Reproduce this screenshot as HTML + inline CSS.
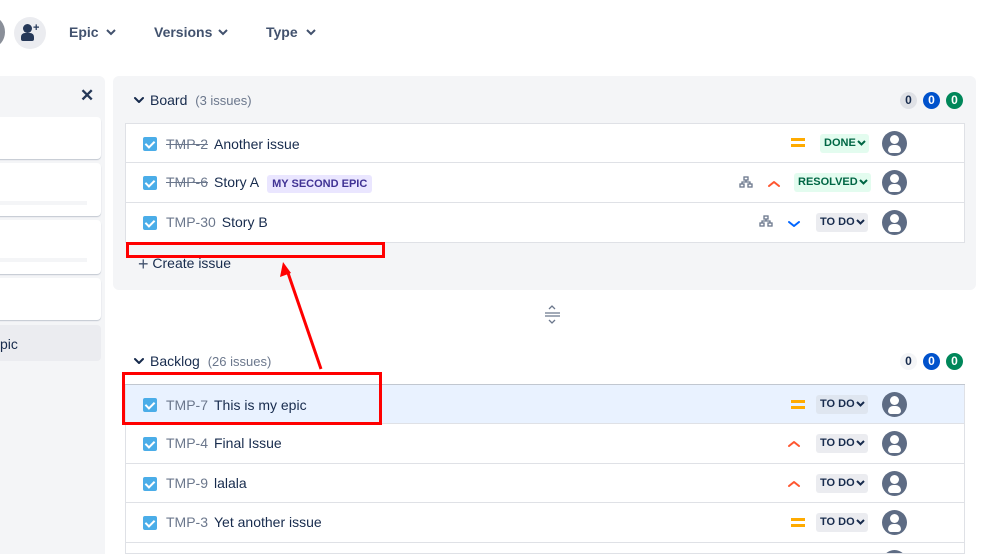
<!DOCTYPE html>
<html><head><style>
*{box-sizing:border-box;margin:0;padding:0}
html,body{width:998px;height:554px;overflow:hidden}
body{background:#fff;font-family:"Liberation Sans",Arial,sans-serif;color:#172b4d;position:relative;font-size:14px}
.a{position:absolute}
.row{position:absolute;left:125px;width:840px;height:40px;background:#fff;border:1px solid #dfe1e6;border-top:none}
.row .cb{position:absolute;left:17px;top:13px;width:14px;height:14px;background:#4bade8;border-radius:2px}
.row .cb:after{content:"";position:absolute;left:4px;top:2px;width:4px;height:7px;border:solid #fff;border-width:0 2px 2px 0;transform:rotate(45deg)}
.row .k{position:absolute;left:40px;top:11px;color:#6b778c;font-size:14px}
.row .s{color:#172b4d;margin-left:6px}
.lz{position:absolute;top:10px;height:19px;border-radius:3px;font-size:11px;font-weight:bold;line-height:19px;padding:0 3px 0 4px;background:#ebecf0;color:#172b4d}
.lz.g{background:#e3fcef;color:#006644}
.lz svg{vertical-align:0px;margin-left:1px}
.av{position:absolute;left:756px;top:7px;width:25px;height:25px;border-radius:50%;background:#5e6c84;overflow:hidden}
.av:before{content:"";position:absolute;left:8px;top:4px;width:9px;height:9px;border-radius:50%;background:#fff}
.av:after{content:"";position:absolute;left:6px;top:14px;width:13px;height:8px;border-radius:5px 5px 3px 3px;background:#fff}
.pe{position:absolute;left:665px;width:14px;height:3px;background:#ffab00}
.cnt{position:absolute;height:17px;min-width:17px;border-radius:9px;font-size:12px;font-weight:bold;text-align:center;line-height:17px}
</style></head><body>
<div class="a" style="left:-20px;top:17px;width:25px;height:30px;border-radius:50%;background:#8a8f99"></div>
<div class="a" style="left:14px;top:17px;width:32px;height:32px;border-radius:50%;background:#ebecf0"></div>
<div class="a" style="left:23px;top:24px;width:9px;height:9px;border-radius:50%;background:#253858"></div>
<div class="a" style="left:21px;top:33px;width:13px;height:8px;border-radius:4px 4px 2px 2px;background:#253858"></div>
<div class="a" style="left:33px;top:22px;font-size:11px;font-weight:bold;color:#253858">+</div>
<div class="a" style="left:69px;top:24px;font-size:14px;font-weight:bold;color:#42526e">Epic</div>
<div class="a" style="left:154px;top:24px;font-size:14px;font-weight:bold;color:#42526e">Versions</div>
<div class="a" style="left:266px;top:24px;font-size:14px;font-weight:bold;color:#42526e">Type</div>
<svg class="a" style="left:0;top:0" width="998" height="60"><g fill="none" stroke="#42526e" stroke-width="2"><path d="M107 30l4 4 4-4M219 30l4 4 4-4M307 30l4 4 4-4"/></g></svg>

<div class="a" style="left:-10px;top:76px;width:115px;height:478px;background:#f4f5f7;border-radius:6px 6px 0 0"></div>
<div class="a" style="left:80px;top:86px;font-size:17px;font-weight:bold;color:#253858">✕</div>
<div class="a" style="left:-10px;top:117px;width:111px;height:42px;background:#fff;border-radius:4px;box-shadow:0 1px 1px #c1c7d0"></div>
<div class="a" style="left:-10px;top:163px;width:111px;height:53px;background:#fff;border-radius:4px;box-shadow:0 1px 1px #c1c7d0"></div>
<div class="a" style="left:0;top:201px;width:87px;height:4px;background:#f4f5f7"></div>
<div class="a" style="left:-10px;top:220px;width:111px;height:54px;background:#fff;border-radius:4px;box-shadow:0 1px 1px #c1c7d0"></div>
<div class="a" style="left:0;top:258px;width:87px;height:4px;background:#f4f5f7"></div>
<div class="a" style="left:-10px;top:278px;width:111px;height:42px;background:#fff;border-radius:4px;box-shadow:0 1px 1px #c1c7d0"></div>
<div class="a" style="left:-10px;top:325px;width:111px;height:36px;background:#ebecf0;border-radius:4px"></div>
<div class="a" style="left:0;top:336px;font-size:14px;color:#172b4d">pic</div>

<div class="a" style="left:113px;top:76px;width:863px;height:214px;background:#f4f5f7;border-radius:6px"></div>
<div class="a" style="left:150px;top:92px;font-size:14px">Board <span style="color:#6b778c;margin-left:4px;font-size:13px">(3 issues)</span></div>
<div class="cnt" style="left:900px;top:92px;background:#dfe1e6;color:#172b4d">0</div>
<div class="cnt" style="left:923px;top:92px;background:#0052cc;color:#fff">0</div>
<div class="cnt" style="left:946px;top:92px;background:#00875a;color:#fff">0</div>
<div class="a" style="left:125px;top:123px;width:840px;height:1px;background:#dfe1e6"></div>

<div class="row" style="top:124px;height:39px"><div class="cb"></div><div class="k" style="top:12px"><s>TMP-2</s><span class="s">Another issue</span></div>
<div class="pe" style="top:14px"></div><div class="pe" style="top:20px"></div>
<div class="lz g" style="left:694px">DONE<svg width="9" height="6"><path d="M1 1l3.5 3.5L8 1" fill="none" stroke="#006644" stroke-width="2"/></svg></div><div class="av"></div></div>
<div class="row" style="top:163px;height:40px"><div class="cb"></div><div class="k"><s>TMP-6</s><span class="s">Story A</span><span style="margin-left:8px;background:#eae6ff;color:#403294;font-size:11px;font-weight:bold;padding:3px 5px;border-radius:3px">MY SECOND EPIC</span></div>
<div class="lz g" style="left:668px">RESOLVED<svg width="9" height="6"><path d="M1 1l3.5 3.5L8 1" fill="none" stroke="#006644" stroke-width="2"/></svg></div><div class="av"></div></div>
<div class="row" style="top:203px;height:40px"><div class="cb"></div><div class="k">TMP-30<span class="s">Story B</span></div>
<div class="lz" style="left:690px">TO DO<svg width="9" height="6"><path d="M1 1l3.5 3.5L8 1" fill="none" stroke="#172b4d" stroke-width="2"/></svg></div><div class="av"></div></div>
<div class="a" style="left:138px;top:254px;font-size:14px;color:#172b4d"><span style="font-size:18px;color:#42526e;vertical-align:-2px">+</span> Create issue</div>

<div class="a" style="left:150px;top:353px;font-size:14px">Backlog <span style="color:#6b778c;margin-left:4px;font-size:13px">(26 issues)</span></div>
<div class="cnt" style="left:900px;top:353px;background:#f4f5f7;color:#172b4d">0</div>
<div class="cnt" style="left:923px;top:353px;background:#0052cc;color:#fff">0</div>
<div class="cnt" style="left:946px;top:353px;background:#00875a;color:#fff">0</div>
<div class="a" style="left:125px;top:384px;width:840px;height:1px;background:#c1c7d0"></div>
<div class="row" style="top:385px;height:39px;background:#e9f2ff"><div class="cb"></div><div class="k" style="top:12px">TMP-7<span class="s">This is my epic</span></div>
<div class="pe" style="top:15px"></div><div class="pe" style="top:21px"></div>
<div class="lz" style="left:690px;background:#dfe6f0">TO DO<svg width="9" height="6"><path d="M1 1l3.5 3.5L8 1" fill="none" stroke="#172b4d" stroke-width="2"/></svg></div><div class="av"></div></div>
<div class="row" style="top:424px;height:40px"><div class="cb"></div><div class="k">TMP-4<span class="s">Final Issue</span></div>
<div class="lz" style="left:690px">TO DO<svg width="9" height="6"><path d="M1 1l3.5 3.5L8 1" fill="none" stroke="#172b4d" stroke-width="2"/></svg></div><div class="av"></div></div>
<div class="row" style="top:464px;height:39px"><div class="cb"></div><div class="k">TMP-9<span class="s">lalala</span></div>
<div class="lz" style="left:690px">TO DO<svg width="9" height="6"><path d="M1 1l3.5 3.5L8 1" fill="none" stroke="#172b4d" stroke-width="2"/></svg></div><div class="av"></div></div>
<div class="row" style="top:503px;height:40px"><div class="cb"></div><div class="k">TMP-3<span class="s">Yet another issue</span></div>
<div class="pe" style="top:15px"></div><div class="pe" style="top:21px"></div>
<div class="lz" style="left:690px">TO DO<svg width="9" height="6"><path d="M1 1l3.5 3.5L8 1" fill="none" stroke="#172b4d" stroke-width="2"/></svg></div><div class="av"></div></div>
<div class="row" style="top:543px;height:11px;overflow:hidden"><div class="av"></div></div>

<svg class="a" style="left:0;top:0" width="998" height="554">
<g fill="none" stroke-width="2" stroke-linecap="round" stroke-linejoin="round">
<path d="M135 98l4 4 4-4M135 359l4 4 4-4" stroke="#172b4d"/>
<path d="M769 186l5-4 5 4" stroke="#ff5630"/>
<path d="M789 222l5 4 5-4" stroke="#0065ff"/>
<path d="M789 446l5-4 5 4" stroke="#ff5630"/>
<path d="M789 486l5-4 5 4" stroke="#ff5630"/>
</g>
<g fill="none" stroke="#6b778c" stroke-width="1.3">
<rect x="744" y="177" width="4" height="3"/><rect x="740" y="184" width="4" height="3"/><rect x="748" y="184" width="4" height="3"/><path d="M746 180v2M742 184v-2h8v2"/>
<rect x="764" y="216" width="4" height="3"/><rect x="760" y="223" width="4" height="3"/><rect x="768" y="223" width="4" height="3"/><path d="M766 219v2M762 223v-2h8v2"/>
<path d="M545 313h15M545 316h15M549 309l3-3 3 3M549 320l3 3 3-3"/>
</g>
</svg>

<div class="a" style="left:126px;top:242px;width:259px;height:16px;border:3px solid #f00"></div>
<div class="a" style="left:122px;top:372px;width:260px;height:53px;border:3px solid #f00"></div>
<svg class="a" style="left:0;top:0" width="998" height="554"><path d="M321 369L287 270" stroke="#f00" stroke-width="3"/><path d="M283 262l-3 15 11-4z" fill="#f00"/></svg>
</body></html>
